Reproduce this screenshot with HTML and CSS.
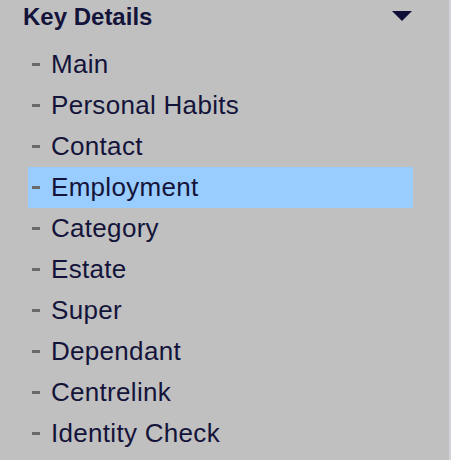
FILE: index.html
```html
<!DOCTYPE html>
<html lang="en">
<head>
  <meta charset="UTF-8">
  <meta name="viewport" content="width=device-width, initial-scale=1.0">
  <title>Key Details</title>
  <link rel="stylesheet" href="styles.css">
</head>
<body>
  <div class="panel">
    <!-- Header -->
    <div class="panel-head">
      <span class="panel-title">Key Details</span>
      <svg class="toggle" width="20" height="10" viewBox="0 0 20 10">
        <polygon points="0,0 20,0 10,10" fill="#0e0e36"/>
      </svg>
    </div>
    <!-- Section links -->
    <ul class="nav-list">
      <li class="nav-item"><span class="dash"></span>Main</li>
      <li class="nav-item"><span class="dash"></span>Personal Habits</li>
      <li class="nav-item"><span class="dash"></span>Contact</li>
      <li class="nav-item active"><span class="dash"></span>Employment</li>
      <li class="nav-item"><span class="dash"></span>Category</li>
      <li class="nav-item"><span class="dash"></span>Estate</li>
      <li class="nav-item"><span class="dash"></span>Super</li>
      <li class="nav-item"><span class="dash"></span>Dependant</li>
      <li class="nav-item"><span class="dash"></span>Centrelink</li>
      <li class="nav-item"><span class="dash"></span>Identity Check</li>
    </ul>
  </div>
</body>
</html>
```

FILE: styles.css
```css
body {
  margin: 0;
  background: #c0c0c0;
  font-family: "Liberation Sans", Arial, sans-serif;
  color: #14143a;
}
.panel {
  box-sizing: border-box;
  min-height: 100vh;
  border-right: 2px solid #d2d2da;
}
.panel-head {
  display: flex;
  justify-content: space-between;
  align-items: flex-start;
  padding: 0 37px 0 23px;
}
.panel-title {
  font-size: 24px;
  font-weight: bold;
  line-height: 34px;
}
.toggle {
  margin-top: 11px;
}
.nav-list {
  list-style: none;
  margin: 10px 0 0 28px;
  padding: 0;
  width: 385px;
}
.nav-item {
  font-size: 26px;
  line-height: 41px;
  letter-spacing: 0.3px;
  padding-left: 4px;
}
.nav-item.active {
  background: #99ccff;
}
.dash {
  display: inline-block;
  width: 8px;
  height: 3px;
  background: #6a6a6a;
  margin-right: 11px;
  vertical-align: 7px;
}
```
